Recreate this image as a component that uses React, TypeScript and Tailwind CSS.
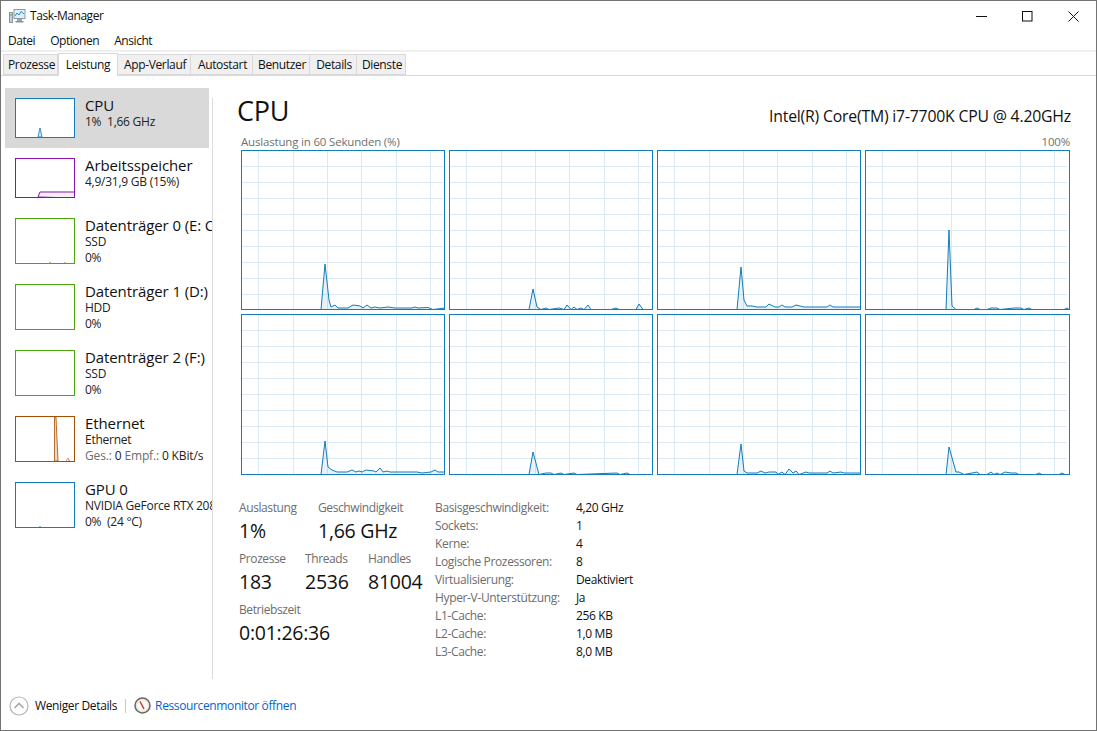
import React from "react";

type P = [number, number];
const charts: { h: number; pts: P[] }[] = [
  { h: 160, pts: [[0,0.5],[79,0.5],[83,45],[87,9],[89,2],[93,4],[96,1],[106,1],[111,4],[118,3],[121,1],[125,4],[129,1],[133,2],[138,1],[146,2],[153,1],[170,1],[173,2],[176,1],[186,1.5],[191,0.5],[203,1]] },
  { h: 160, pts: [[0,0.5],[79,0.5],[83,20],[87,2],[91,0.5],[96,1],[99,0.5],[109,1],[114,0.5],[117,4],[121,0.5],[124,2],[127,0.5],[131,1],[134,0.5],[138,4],[141,0.5],[161,0.5],[166,1],[169,0.5],[186,0.5],[189,5],[193,0.5],[203,0.5]] },
  { h: 160, pts: [[0,0.5],[79,0.5],[83,42],[86,9],[89,3],[94,3],[99,2],[108,2],[111,5],[117,2],[121,2],[124,4],[127,2],[134,2],[138,4],[146,2],[169,2],[172,4],[175,2],[203,2]] },
  { h: 160, pts: [[0,0.5],[80,0.5],[83,79],[86,3],[90,0.5],[108,0.5],[111,1],[114,0.5],[121,0.5],[125,1],[131,1],[134,0.5],[148,1],[155,1],[158,0.5],[163,1],[166,0.5],[198,0.5],[201,1],[203,0.5]] },
  { h: 161, pts: [[0,0.5],[79,0.5],[83,33],[86,7],[90,4],[95,2],[105,2],[110,4],[114,2],[117,3],[120,2],[124,4],[132,3],[134,2],[138,6],[141,2],[145,3],[148,2],[175,2],[180,1],[189,2],[193,4],[196,2],[203,2]] },
  { h: 161, pts: [[0,0.5],[79,0.5],[83,22],[87,7],[89,0.5],[96,1],[101,1],[104,0.5],[111,1],[114,0.5],[124,1],[127,0.5],[167,1],[170,0.5],[177,1],[180,0.5],[203,0.5]] },
  { h: 161, pts: [[0,0.5],[79,0.5],[83,30],[86,3],[89,1],[99,1],[103,3],[107,1],[111,2],[118,2],[120,0.5],[124,2],[127,0.5],[131,5],[135,1],[138,3],[141,0.5],[148,2],[151,1],[169,1],[172,3],[175,1],[183,2],[186,1],[203,1]] },
  { h: 161, pts: [[0,0.5],[80,0.5],[83,27],[90,2],[93,2],[98,0.5],[106,1],[111,2],[114,0.5],[121,0.5],[125,2],[128,0.5],[131,1],[134,0.5],[139,2],[145,1],[150,1],[153,0.5],[170,0.5],[173,1],[176,0.5],[193,0.5],[196,1],[199,0.5],[203,0.5]] },
];

const vLines = [17, 52, 86, 120, 155, 189];

function CoreChart({ h, pts }: { h: number; pts: P[] }) {
  const inner = h - 2;
  const line = pts.map(([x, y]) => `${x},${y === 0.5 ? inner + 0.5 : inner - y}`).join(" ");
  const rows: number[] = [];
  for (let y = 15.5; y < inner - 1; y += 16) rows.push(y);
  return (
    <div className="border border-[#117dbb] bg-white" style={{ height: h }}>
      <svg width="100%" height={inner} className="block">
        {rows.map((y) => (
          <line key={y} x1="0" x2="201" y1={y} y2={y} stroke="#d9eaf4" />
        ))}
        {vLines.map((x) => (
          <line key={x} x1={x - 0.5} x2={x - 0.5} y1="0" y2={inner} stroke="#d9eaf4" />
        ))}
        <polygon points={`${line} 203,${inner} 0,${inner}`} fill="#117dbb" fillOpacity="0.1" />
        <polyline points={line} fill="none" stroke="#117dbb" strokeWidth="1" />
      </svg>
    </div>
  );
}

function Thumb({ h, color, children }: { h: number; color: string; children?: React.ReactNode }) {
  return (
    <div className="w-[60px] shrink-0 border bg-white" style={{ height: h, borderColor: color }}>
      <svg width="58" height={h - 2} className="block">
        {children}
      </svg>
    </div>
  );
}

function SideItem({
  selected,
  height,
  thumb,
  title,
  lines,
}: {
  selected?: boolean;
  height: string;
  thumb: React.ReactNode;
  title: string;
  lines: React.ReactNode[];
}) {
  return (
    <div className={`flex w-[204px] pl-[10px] pt-[10px] ${height} ${selected ? "bg-[#d9d9d9]" : ""}`}>
      {thumb}
      <div className="ml-[10px] whitespace-pre">
        <div className="-mt-[1px] mb-[1px] text-[15px] leading-[16px] tracking-[-0.1px] text-[#111]">{title}</div>
        {lines.map((l, i) => (
          <div key={i} className="text-[12px] leading-[16px] text-[#222]">
            {l}
          </div>
        ))}
      </div>
    </div>
  );
}

function Stat({ label, value, w }: { label: string; value: string; w: string }) {
  return (
    <div className={w}>
      <div className="text-[12px] leading-[16px] tracking-[-0.4px] text-[#6d6d6d]">{label}</div>
      <div className="mt-[2px] whitespace-nowrap text-[19.5px] leading-[26px] text-[#111]">{value}</div>
    </div>
  );
}

const spec: [string, string][] = [
  ["Basisgeschwindigkeit:", "4,20 GHz"],
  ["Sockets:", "1"],
  ["Kerne:", "4"],
  ["Logische Prozessoren:", "8"],
  ["Virtualisierung:", "Deaktiviert"],
  ["Hyper-V-Unterstützung:", "Ja"],
  ["L1-Cache:", "256 KB"],
  ["L2-Cache:", "1,0 MB"],
  ["L3-Cache:", "8,0 MB"],
];

const tabs: [string, string][] = [
  ["Prozesse", "w-[55px]"],
  ["Leistung", "w-[60px]"],
  ["App-Verlauf", "w-[73px]"],
  ["Autostart", "w-[62px]"],
  ["Benutzer", "w-[57px]"],
  ["Details", "w-[47px]"],
  ["Dienste", "w-[49px]"],
];

export default function App() {
  return (
    <div className="flex h-[731px] w-[1097px] flex-col overflow-hidden border border-[#737373] bg-white font-['Open_Sans',sans-serif] tracking-[-0.25px] text-[#111]">
      {/* title bar */}
      <div className="flex h-[30px] shrink-0 items-center">
        <svg width="17" height="16" viewBox="0 0 17 16" className="ml-[8px]">
          <rect x="5" y="1.5" width="11" height="9" fill="#dff0fb" stroke="#8a9aa5" />
          <polyline points="6,8 8,5 10,7 12,3.5 15,6" fill="none" stroke="#2a8fd0" strokeWidth="1" />
          <rect x="8" y="11" width="5" height="2" fill="#9aa5ad" />
          <rect x="6.5" y="13" width="8" height="1.5" fill="#8a949b" />
          <rect x="0.5" y="4.5" width="3" height="10" fill="#c7ced3" stroke="#8c969d" />
          <rect x="1.5" y="6" width="1" height="2" fill="#5cb04a" />
        </svg>
        <span className="ml-[4px] text-[12px] tracking-[-0.45px]">Task-Manager</span>
        <div className="ml-auto flex items-center pr-[17px]">
          <svg width="11" height="11" className="mr-[35px]">
            <line x1="0" x2="11" y1="5.5" y2="5.5" stroke="#111" />
          </svg>
          <svg width="11" height="11" className="mr-[35px]">
            <rect x="0.5" y="0.5" width="9.5" height="9.5" fill="none" stroke="#111" />
          </svg>
          <svg width="11" height="11">
            <path d="M0.5 0.5L10.5 10.5M10.5 0.5L0.5 10.5" stroke="#111" fill="none" />
          </svg>
        </div>
      </div>
      {/* menu */}
      <div className="flex h-[19px] shrink-0 items-center gap-[15px] pl-[7px] text-[12px] tracking-[-0.45px]">
        <span>Datei</span>
        <span>Optionen</span>
        <span>Ansicht</span>
      </div>
      <div className="h-[2px] shrink-0 bg-[#f0f0f0]" />
      {/* tabs */}
      <div className="flex h-[24px] shrink-0 items-end border-b border-[#d9d9d9] pl-[2px] text-[12px] tracking-[-0.35px]">
        {tabs.map(([t, w]) =>
          t === "Leistung" ? (
            <div
              key={t}
              className={`-mb-px flex h-[23px] items-start justify-center border border-b-0 border-[#d9d9d9] bg-white pt-[2px] ${w}`}
            >
              {t}
            </div>
          ) : (
            <div
              key={t}
              className={`flex h-[21px] items-center justify-center border-y border-r border-[#d9d9d9] bg-[#f0f0f0] pl-[2px] pt-[1px] first:border-l ${w}`}
            >
              {t}
            </div>
          ),
        )}
      </div>
      {/* main */}
      <div className="flex min-h-0 flex-1">
        <div className="h-full w-[211px] shrink-0 overflow-hidden pl-[4px] pt-[12px]">
          <SideItem
            selected
            height="h-[60px]"
            title="CPU"
            lines={["1%  1,66 GHz"]}
            thumb={
              <Thumb h={40} color="#117dbb">
                <polygon points="22,38 24,29 26,38" fill="#cfe5f2" stroke="#117dbb" strokeWidth="0.8" />
              </Thumb>
            }
          />
          <SideItem
            height="h-[60px]"
            title="Arbeitsspeicher"
            lines={["4,9/31,9 GB (15%)"]}
            thumb={
              <Thumb h={40} color="#8b12ae">
                <polygon points="22,38 24,33 59,33 59,39" fill="#f4f2f4" stroke="#8b12ae" strokeWidth="1" />
              </Thumb>
            }
          />
          {[
            ["Datenträger 0 (E: C", "SSD", [34, 49]],
            ["Datenträger 1 (D:)", "HDD", []],
            ["Datenträger 2 (F:)", "SSD", []],
          ].map(([t, s, ticks]) => (
            <SideItem
              key={t as string}
              height="h-[66px]"
              title={t as string}
              lines={[s as string, "0%"]}
              thumb={
                <Thumb h={46} color="#4da60c">
                  {(ticks as number[]).map((x) => (
                    <line key={x} x1={x} x2={x} y1="43" y2="44" stroke="#4da60c" />
                  ))}
                </Thumb>
              }
            />
          ))}
          <SideItem
            height="h-[66px]"
            title="Ethernet"
            lines={[
              "Ethernet",
              <span className="tracking-[-0.15px]">
                <span className="text-[#6d6d6d]">Ges.:</span> 0 <span className="text-[#6d6d6d]">Empf.:</span> 0 KBit/s
              </span>,
            ]}
            thumb={
              <Thumb h={46} color="#a74f01">
                <polygon points="38.5,44 38.5,0 40,0 42,44" fill="#f0d9c4" stroke="#a74f01" strokeWidth="0.8" />
                <polyline points="50,44 52,41 53,44 54,43" fill="none" stroke="#c98550" strokeWidth="0.8" />
              </Thumb>
            }
          />
          <SideItem
            height="h-[66px]"
            title="GPU 0"
            lines={["NVIDIA GeForce RTX 2080", "0%  (24 °C)"]}
            thumb={
              <Thumb h={46} color="#117dbb">
                <line x1="24" x2="24" y1="43" y2="44" stroke="#117dbb" />
              </Thumb>
            }
          />
        </div>
        <div className="mb-[1px] mt-[22px] w-px shrink-0 bg-[#dcdcdc]" />
        {/* content */}
        <div className="w-[858px] pl-[24px]">
          <div className="flex h-[58px] items-end justify-between">
            <div className="mb-[6px] text-[27px] leading-[34px] tracking-[-0.3px] text-[#111]">CPU</div>
            <div className="mb-[8px] text-[15.8px] leading-[20px] tracking-[-0.2px] text-[#111]">
              Intel(R) Core(TM) i7-7700K CPU @ 4.20GHz
            </div>
          </div>
          <div className="ml-[4px] mr-[1px] flex h-[16px] items-center justify-between text-[11.5px] tracking-[-0.18px] text-[#707070]">
            <span>Auslastung in 60 Sekunden (%)</span>
            <span>100%</span>
          </div>
          <div className="ml-[4px] mr-[1px] grid grid-cols-[204px_204px_204px_205px] gap-x-[4px] gap-y-[4px]">
            {charts.map((c, i) => (
              <CoreChart key={i} h={c.h} pts={c.pts} />
            ))}
          </div>
          <div className="ml-[2px] mt-[25px] flex">
            <div className="flex w-[196px] flex-col gap-[7px]">
              <div className="flex">
                <Stat label="Auslastung" value="1%" w="w-[79px]" />
                <Stat label="Geschwindigkeit" value="1,66 GHz" w="w-[110px]" />
              </div>
              <div className="flex">
                <Stat label="Prozesse" value="183" w="w-[66px]" />
                <Stat label="Threads" value="2536" w="w-[63px]" />
                <Stat label="Handles" value="81004" w="w-[60px]" />
              </div>
              <Stat label="Betriebszeit" value="0:01:26:36" w="w-[120px]" />
            </div>
            <div className="-mt-px grid auto-rows-[18px] grid-cols-[141px_auto] text-[12px] leading-[18px] tracking-[-0.35px]">
              {spec.map(([k, v]) => (
                <React.Fragment key={k}>
                  <span className="text-[#6d6d6d]">{k}</span>
                  <span className="text-[#111]">{v}</span>
                </React.Fragment>
              ))}
            </div>
          </div>
        </div>
      </div>
      {/* footer */}
      <div className="flex h-[50px] shrink-0 items-center pl-[8px] pt-[1px] text-[12px] tracking-[-0.37px]">
        <svg width="20" height="20" viewBox="0 0 20 20">
          <circle cx="10" cy="10" r="9" fill="#fff" stroke="#b5b5b5" strokeWidth="1.2" />
          <polyline points="5.5,12 10,7.5 14.5,12" fill="none" stroke="#a8a8a8" strokeWidth="1.6" />
        </svg>
        <span className="ml-[6px]">Weniger Details</span>
        <div className="ml-[8px] h-[14px] w-px bg-[#c8c8c8]" />
        <svg width="17" height="17" viewBox="0 0 17 17" className="ml-[8px]">
          <circle cx="8.5" cy="8.5" r="7.5" fill="#ece9e4" stroke="#6d6660" strokeWidth="1.5" />
          <circle cx="8.5" cy="8.5" r="5" fill="#fbfaf8" />
          <line x1="6" y1="4.5" x2="10" y2="12" stroke="#c8382a" strokeWidth="1.5" />
        </svg>
        <span className="ml-[4px] text-[#0066cc]">Ressourcenmonitor öffnen</span>
      </div>
    </div>
  );
}
